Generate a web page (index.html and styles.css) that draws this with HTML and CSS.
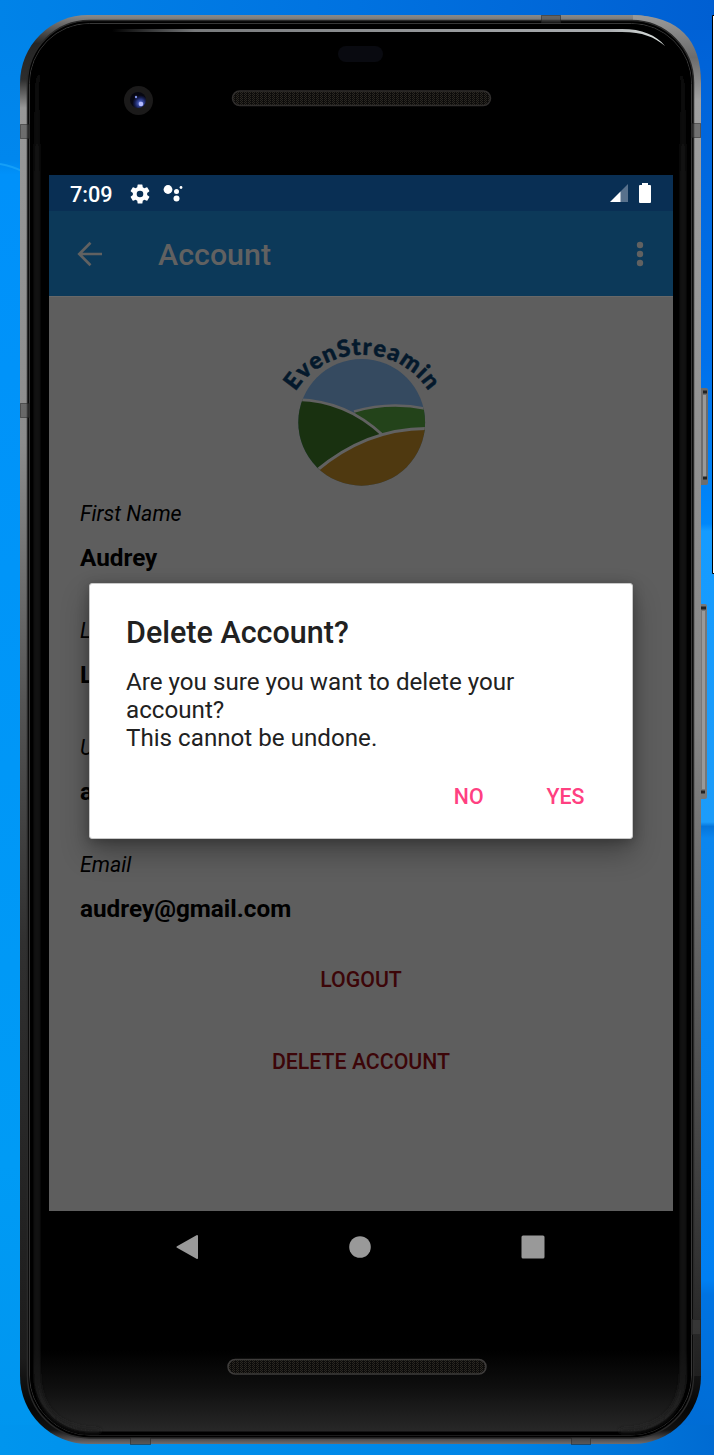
FILE: index.html
```
<!DOCTYPE html>
<html lang="en">
<head>
<meta charset="utf-8">
<title>Account</title>
<link rel="stylesheet" href="styles.css">
</head>
<body>
<div class="desktop">
<svg class="device" width="714" height="1455" viewBox="0 0 714 1455" aria-hidden="true">
  <defs>
    <linearGradient id="wallL" x2="0" y2="1"><stop offset="0" stop-color="#0083e8"/><stop offset=".11" stop-color="#0087ee"/><stop offset=".12" stop-color="#0091fa"/><stop offset=".8" stop-color="#009bf5"/><stop offset="1" stop-color="#0095ee"/></linearGradient>
    <linearGradient id="wallT"><stop offset="0" stop-color="#0083e8"/><stop offset=".5" stop-color="#0072e0"/><stop offset="1" stop-color="#005fd2"/></linearGradient>
    <linearGradient id="wallB"><stop offset="0" stop-color="#0095ee"/><stop offset=".7" stop-color="#0084e6"/><stop offset="1" stop-color="#006bd2"/></linearGradient>
    <linearGradient id="wallR" x2="0" y2="1"><stop offset="0" stop-color="#0060d4"/><stop offset=".25" stop-color="#0071eb"/><stop offset=".36" stop-color="#0087fa"/><stop offset=".365" stop-color="#159bff"/><stop offset=".565" stop-color="#1c9cfa"/><stop offset=".568" stop-color="#0575da"/><stop offset=".576" stop-color="#0b86ee"/><stop offset=".88" stop-color="#007ff2"/><stop offset=".89" stop-color="#0073e2"/><stop offset="1" stop-color="#006bd2"/></linearGradient>
    <linearGradient id="metal" x2="0" y2="1"><stop offset="0" stop-color="#8a8a8a"/><stop offset=".02" stop-color="#252525"/><stop offset=".045" stop-color="#2d2d2d"/><stop offset=".065" stop-color="#989898"/><stop offset=".3" stop-color="#8c8c8c"/><stop offset=".48" stop-color="#555"/><stop offset=".65" stop-color="#303030"/><stop offset=".94" stop-color="#1c1c1c"/><stop offset=".975" stop-color="#050505"/><stop offset=".99" stop-color="#111"/><stop offset="1" stop-color="#6e6c6e"/></linearGradient>
    <linearGradient id="metalR" x2="0" y2="1429" y1="15" gradientUnits="userSpaceOnUse"><stop offset="0" stop-color="#9a9a9a"/><stop offset=".03" stop-color="#6c6c6c"/><stop offset=".06" stop-color="#a0a0a0"/><stop offset=".5" stop-color="#868686"/><stop offset=".8" stop-color="#444"/><stop offset="1" stop-color="#181818"/></linearGradient>
    <linearGradient id="rim"><stop offset="0" stop-color="#333"/><stop offset=".1" stop-color="#858585"/><stop offset="1" stop-color="#9a9a9a"/></linearGradient>
    <linearGradient id="rimB"><stop offset="0" stop-color="#333"/><stop offset=".12" stop-color="#777577"/><stop offset=".88" stop-color="#777577"/><stop offset="1" stop-color="#333"/></linearGradient>
    <linearGradient id="chin" x2="0" y2="1"><stop offset="0" stop-color="#000"/><stop offset=".45" stop-color="#0f0f0f"/><stop offset="1" stop-color="#2a2a2a"/></linearGradient>
    <linearGradient id="edge" y1="40" x2="0" y2="180" gradientUnits="userSpaceOnUse"><stop offset="0" stop-color="#000"/><stop offset="1" stop-color="#222"/></linearGradient>
    <linearGradient id="shine"><stop offset="0" stop-color="#000"/><stop offset=".15" stop-color="#77797b"/><stop offset=".9" stop-color="#aaadb0"/><stop offset="1" stop-color="#dfe5e2"/></linearGradient>
    <radialGradient id="lens" cx=".65" cy=".7"><stop offset="0" stop-color="#9da9ff"/><stop offset=".3" stop-color="#3d4fa8"/><stop offset=".7" stop-color="#151d50"/><stop offset="1" stop-color="#070711"/></radialGradient>
    <pattern id="mesh" width="4" height="2" patternUnits="userSpaceOnUse"><rect width="4" height="2" fill="#0d0c0b"/><path d="M0 .5h1M2 .5h1M1 1.5h1" stroke="#2b2822"/></pattern>
    <filter id="soft" x="-10%" y="-10%" width="120%" height="120%"><feGaussianBlur stdDeviation="2"/></filter>
    <clipPath id="glass"><rect x="30" y="24" width="661" height="1411" rx="60"/></clipPath>
  </defs>
  <rect width="100" height="1455" fill="url(#wallL)"/>
  <path d="M0 164Q12 166 24 172" stroke="#159ff7" stroke-width="2" fill="none"/>
  <rect x="640" width="74" height="1455" fill="url(#wallR)"/>
  <rect width="714" height="30" fill="url(#wallT)"/>
  <rect y="1425" width="714" height="30" fill="url(#wallB)"/>
  <path d="M714 15.500H712.500V573.500H714" fill="#fff" stroke="#000"/>

  <g>
    <rect x="699" y="388" width="9" height="97" rx="2" fill="#6d6d6d"/><rect x="703" y="395" width="3" height="82" fill="#999"/><path d="M703 392h4M703 478h4" stroke="#222" stroke-width="3"/>
    <rect x="699" y="604" width="8" height="195" rx="2" fill="#777"/><rect x="702" y="611" width="3" height="178" fill="#999"/><path d="M701 608h5M701 792h4" stroke="#222" stroke-width="3"/>
  </g>
  <rect x="20" y="15" width="681" height="1429" rx="68" fill="url(#metal)"/>
  <path d="M633 15Q701 17 701 83V1376H691V85Q691 26 633 20Z" fill="url(#metalR)"/>
  <path d="M80 17.500H640" stroke="url(#rim)" stroke-width="5"/>
  <path d="M84 1441.500H637" stroke="url(#rimB)" stroke-width="4"/>
  <rect x="27.500" y="20.500" width="666" height="1417.500" rx="62" fill="#000" stroke="#292929" stroke-width="1.500"/>
  <rect x="29.500" y="23.500" width="662" height="1411.500" rx="60" fill="#000" stroke="#383838"/>
  <g clip-path="url(#glass)">
    <rect x="31" y="1350" width="659" height="85" fill="url(#chin)"/>
    <rect x="31" y="25" width="659" height="1409" rx="60" fill="none" stroke="#000" stroke-width="5"/>
    <path d="M60 45Q37 62 37 90V1370Q37 1431 100 1431M660 45Q683 62 683 90V1370Q683 1431 620 1431" fill="none" stroke="url(#edge)" stroke-width="4" filter="url(#soft)"/>
  </g>
  <path d="M112 29H622C642 29 656 35 665 46C654 37 643 32 622 32H112Z" fill="url(#shine)"/>
  <g fill="#444" fill-opacity=".5" stroke="#222" stroke-opacity=".5">
    <rect x="20.500" y="124.500" width="9" height="14"/><rect x="20.500" y="403.500" width="9" height="14"/>
    <rect x="691.500" y="123.500" width="9" height="14"/><rect x="691.500" y="1319.500" width="9" height="15"/>
    <rect x="541.500" y="15.500" width="19" height="7"/><rect x="130.500" y="1437.500" width="20" height="7"/><rect x="571.500" y="1437.500" width="19" height="7"/>
  </g>
  <rect x="338" y="46" width="45" height="16" rx="8" fill="#090a10"/>
  <circle cx="138.500" cy="100.500" r="14.500" fill="#1b1a1a"/><circle cx="138" cy="100" r="8" fill="url(#lens)"/><circle cx="141" cy="104" r="2.300" fill="#b5bcff"/><circle cx="136" cy="97" r="1.200" fill="#7f91e8"/>
  <rect x="232.500" y="91" width="258" height="14.500" rx="7.250" fill="url(#mesh)" stroke="#302e2d" stroke-width="1.500"/>
  <rect x="228" y="1359.500" width="258" height="14.500" rx="7.250" fill="url(#mesh)" stroke="#3e3c3b" stroke-width="1.500"/>
</svg>

<main class="screen">
  <header class="status">
    <span class="clock">7:09</span>
    <svg class="gear" width="24" height="24" viewBox="0 0 24 24"><path fill="#fff" fill-rule="evenodd" d="M19.140 12.940c.04-.3.060-.61.060-.94s-.02-.64-.07-.94l2.030-1.580a.49.490 0 0 0 .12-.61l-1.920-3.320a.49.490 0 0 0-.59-.22l-2.390.96a7 7 0 0 0-1.620-.94l-.36-2.540A.48.480 0 0 0 13.920 2.400h-3.840a.48.480 0 0 0-.47.410l-.36 2.540c-.59.240-1.130.57-1.620.94l-2.390-.96a.48.480 0 0 0-.59.220L2.740 8.870a.48.480 0 0 0 .12.610l2.030 1.580a6 6 0 0 0 0 1.880l-2.030 1.580a.49.490 0 0 0-.12.610l1.920 3.320c.12.220.37.290.59.220l2.390-.96c.5.380 1.030.7 1.620.94l.36 2.540c.05.240.24.410.48.410h3.840c.24 0 .44-.17.470-.41l.36-2.540a7 7 0 0 0 1.620-.94l2.390.96c.22.080.47 0 .59-.22l1.920-3.320a.48.480 0 0 0-.12-.61zM12 15.300a3.300 3.300 0 1 1 0-6.600 3.300 3.300 0 0 1 0 6.600z"/></svg>
    <svg class="assistant" width="20" height="18" viewBox="0 0 20 18" fill="#fff"><circle cx="5" cy="5.500" r="4.400"/><circle cx="13.500" cy="7.500" r="2.500"/><circle cx="13.500" cy="14.500" r="3"/><circle cx="18" cy="3.500" r="1.400"/></svg>
    <svg class="signal" width="18" height="18" viewBox="0 0 18 18"><path d="M18 0V18H10V8Z" fill="#58718c"/><path d="M10.500 7.500V18H0Z" fill="#fff"/></svg>
    <svg width="12" height="20" viewBox="0 0 12 20"><path d="M3 0h6v2h2q1 0 1 1v16q0 1-1 1H1q-1 0-1-1V3q0-1 1-1h2z" fill="#fff"/></svg>
  </header>
  <nav class="appbar">
    <svg width="26" height="26" viewBox="0 0 26 26" fill="none" stroke="#616161" stroke-width="2.700"><path d="M25 13H3M13.500 1.800L2.300 13l11.200 11.200"/></svg>
    <h1 class="title">Account</h1>
    <svg width="8" height="26" viewBox="0 0 8 26" fill="#616161"><circle cx="4" cy="4" r="3.200"/><circle cx="4" cy="13" r="3.200"/><circle cx="4" cy="22" r="3.200"/></svg>
  </nav>
  <section class="account">
    <svg class="logo" width="190" height="180" viewBox="270 320 190 180">
      <defs><clipPath id="disc"><circle cx="361.700" cy="422.300" r="63.400"/></clipPath><path id="arc" d="M295.500 391.500A79 79 0 0 1 440 420"/></defs>
      <g clip-path="url(#disc)">
        <rect x="298" y="358" width="128" height="129" fill="#354a60"/>
        <path d="M354 411.500Q390 401 427 409V435H370Z" fill="#23431a"/>
        <path d="M354 411.500Q390 401 427 409" stroke="#616161" stroke-width="2.600" fill="none"/>
        <path d="M296 399.500Q345 400 382 434.500L320 470L290 480Z" fill="#193110"/>
        <path d="M296 399.500Q345 400 382 434.500" stroke="#616161" stroke-width="2.800" fill="none"/>
        <path d="M317 470Q367 428 428 428.500V490H317Z" fill="#4f3910"/>
        <path d="M316 471Q367 428 428 428.500" stroke="#616161" stroke-width="3" fill="none"/>
      </g>
      <text class="brand"><textPath href="#arc" textLength="158">EvenStreamin</textPath></text>
    </svg>
    <dl class="fields">
      <div class="field"><dt>First Name</dt><dd>Audrey</dd></div>
      <div class="field"><dt>L</dt><dd>L</dd></div>
      <div class="field"><dt>U</dt><dd>a</dd></div>
      <div class="field"><dt>Email</dt><dd>audrey@gmail.com</dd></div>
    </dl>
    <button class="action">LOGOUT</button>
    <button class="action">DELETE ACCOUNT</button>
  </section>
  <footer class="navkeys">
    <svg width="24" height="26" viewBox="0 0 24 26"><path d="M22 2L2.500 13L22 24Z" fill="#999" stroke="#999" stroke-width="2" stroke-linejoin="round"/></svg>
    <svg width="22" height="22"><circle cx="11" cy="11" r="10.800" fill="#999"/></svg>
    <svg width="24" height="24"><rect x=".5" y=".5" width="23" height="23" rx="1.500" fill="#999"/></svg>
  </footer>
  <div class="dialog" role="dialog">
    <h2 class="dialog-title">Delete Account?</h2>
    <p class="message">Are you sure you want to delete your account?<br>This cannot be undone.</p>
    <div class="choices"><button class="choice">NO</button><button class="choice">YES</button></div>
  </div>
</main>
</div>
</body>
</html>
```
FILE: styles.css
```
* { box-sizing: border-box; }
body { margin: 0; font-family: Roboto, sans-serif; }
button { font: inherit; border: 0; background: none; padding: 0; }
.desktop { position: relative; width: 714px; height: 1455px; padding: 175px 41px 0 49px; overflow: hidden; background: #0078e4; }
.device { position: absolute; left: 0; top: 0; }
.screen { position: relative; width: 624px; }
.status { height: 36px; padding: 0 22px 0 21px; display: flex; align-items: center; background: #092f54; color: #fff; }
.clock { font-size: 21.700px; font-weight: 500; line-height: 36px; width: 58px; padding-top: 3px; }
.gear { margin: 1px 11px 0 0; }
.signal { margin: 0 11px 0 auto; }
.appbar { height: 85px; padding: 0 29px 0 28px; display: flex; align-items: center; background: #0c3959; color: #616161; }
.title { flex: 1; margin: 3px 0 0 55px; font-size: 30.400px; font-weight: 500; line-height: 36px; }
.account { height: 915px; padding-top: 23px; display: flex; flex-direction: column; align-items: center; background: #5e5e5e; color: #000; border-top: 1px solid #686868; }
.logo { display: block; margin-left: 8px; flex: none; }
.brand { font-family: Lato, sans-serif; font-size: 23.500px; font-weight: 900; fill: #04192c; stroke: #04192c; stroke-width: .5px; }
.fields { margin: 0 0 -13px; width: 100%; padding: 1px 0 0 31px; }
.field { height: 117px; }
dt { font-size: 21.400px; font-style: italic; line-height: 26px; }
dd { margin: 17px 0 0; font-size: 24.300px; font-weight: 700; line-height: 28px; }
.action { height: 48px; margin-bottom: 34px; font-size: 21.300px; font-weight: 500; line-height: 48px; color: #3c0508; }
.navkeys { height: 72px; padding: 0 128px 0 126px; display: flex; align-items: center; justify-content: space-between; }
.dialog { position: absolute; left: 40px; top: 408px; width: 544px; height: 256px; padding: 31px 36px; border: 1px solid #c8c8c8; border-radius: 3px; background: #fff; color: #212121; box-shadow: 0 14px 28px rgba(0,0,0,.3), 0 2px 12px rgba(0,0,0,.25); }
.dialog-title { margin: 0; font-size: 30.500px; font-weight: 500; line-height: 36px; }
.message { margin: 17px 0 0; font-size: 24.180px; line-height: 28.200px; }
.choices { display: flex; justify-content: flex-end; gap: 63px; margin-top: 30px; padding-right: 11.500px; }
.choice { font-size: 21.300px; font-weight: 500; line-height: 28px; color: #ff4081; }
```
